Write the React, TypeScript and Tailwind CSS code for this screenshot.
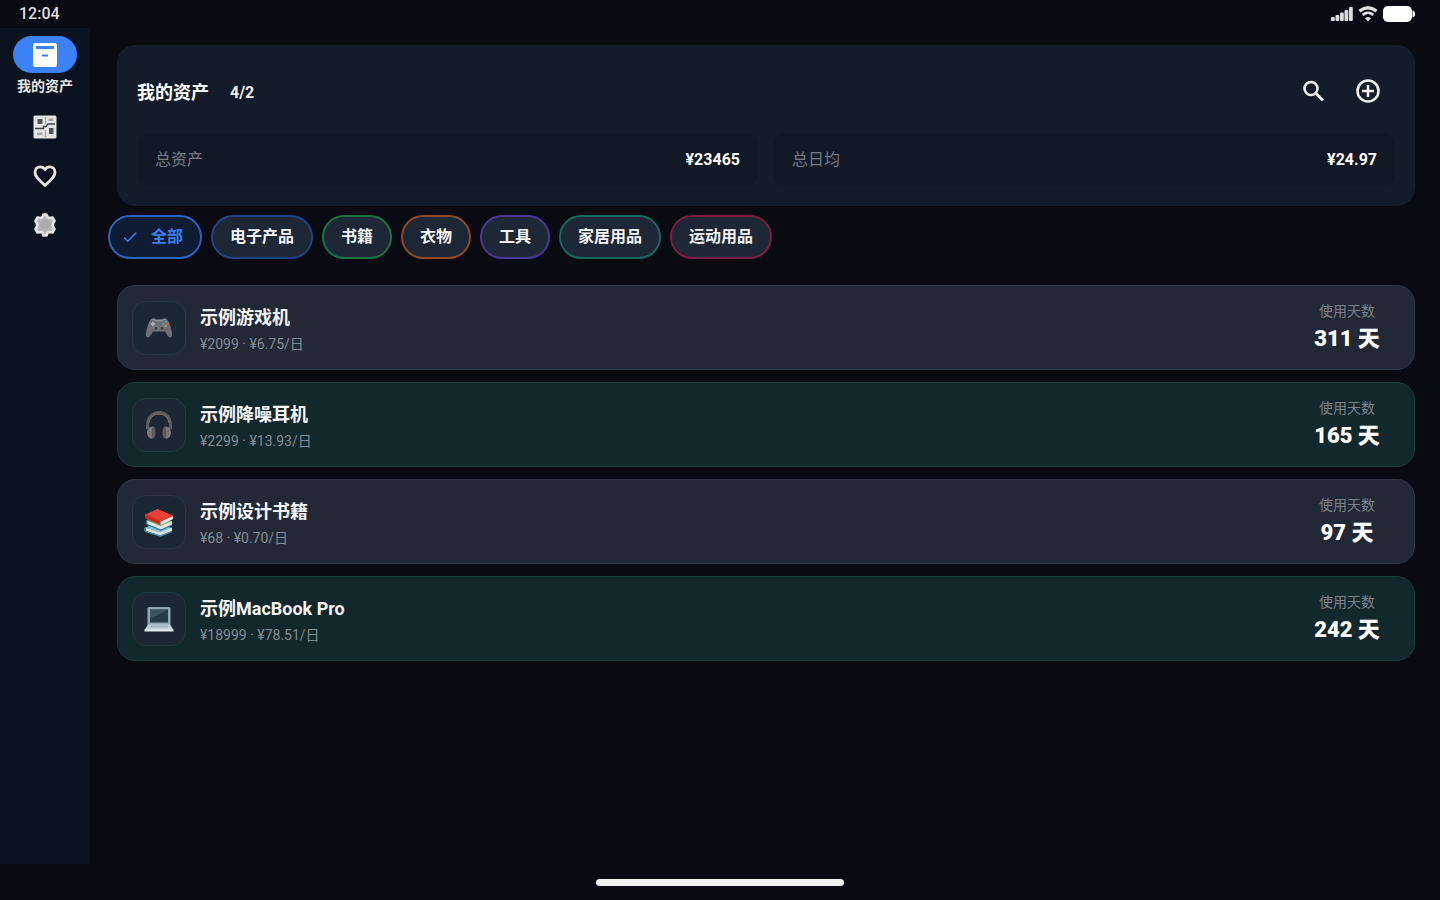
import type { ReactNode } from "react";
import { clsx } from "clsx";
import { MdCheck } from "react-icons/md";

type Asset = {
  name: string;
  detail: string;
  days: number;
  active: boolean;
  icon: ReactNode;
};

const categories = [
  { label: "电子产品", border: "border-[#1f4384]" },
  { label: "书籍", border: "border-[#1b7340]" },
  { label: "衣物", border: "border-[#8f4a26]" },
  { label: "工具", border: "border-[#4c3894]" },
  { label: "家居用品", border: "border-[#17695f]" },
  { label: "运动用品", border: "border-[#7d1c42]" },
];

const assets: Asset[] = [
  { name: "示例游戏机", detail: "¥2099 · ¥6.75/日", days: 311, active: false, icon: <GamepadIcon /> },
  { name: "示例降噪耳机", detail: "¥2299 · ¥13.93/日", days: 165, active: true, icon: <HeadphoneIcon /> },
  { name: "示例设计书籍", detail: "¥68 · ¥0.70/日", days: 97, active: false, icon: <BooksIcon /> },
  { name: "示例MacBook Pro", detail: "¥18999 · ¥78.51/日", days: 242, active: true, icon: <LaptopIcon /> },
];

function GamepadIcon() {
  return (
    <svg viewBox="0 0 30 30" className="h-[30px] w-[30px]" aria-hidden="true">
      <path
        d="M7.500 6c1.500-1 3.500-.8 4.500.3h6c1-1.100 3-1.300 4.500-.3 3.200 2.300 5.200 11 5.700 15.700.2 3-3.200 3.600-4.400 1.300L21 18.500H9L6.200 23c-1.200 2.300-4.600 1.700-4.400-1.300C2.300 17 4.300 8.300 7.500 6z"
        fill="#6b6f74"
      />
      <path d="M7.600 7c1.400-.8 3-.6 4 .6h6.800c1-1.200 2.600-1.400 4-.6" fill="none" stroke="#8d9195" strokeWidth="1.200" />
      <path d="M8.800 8.700v4.600M6.500 11h4.600" stroke="#b2b5b8" strokeWidth="1.500" />
      <circle cx="12" cy="15.300" r="2.100" fill="#3b4046" stroke="#969a9d" strokeWidth=".6" />
      <circle cx="18" cy="15.300" r="2.100" fill="#3b4046" stroke="#969a9d" strokeWidth=".6" />
      <circle cx="21.500" cy="9" r="1.200" fill="#59a48d" />
      <circle cx="23.600" cy="11" r="1.400" fill="#d45a42" />
      <circle cx="19.300" cy="11" r="1.200" fill="#5494ad" />
      <circle cx="21.500" cy="13" r="1.200" fill="#b6a052" />
    </svg>
  );
}

function HeadphoneIcon() {
  return (
    <svg viewBox="0 0 30 30" className="h-[30px] w-[30px]" aria-hidden="true">
      <path d="M3.500 19v-4C3.500 8 8.500 2.500 15 2.500S26.500 8 26.500 15v4" fill="none" stroke="#5c5e60" strokeWidth="3" />
      <path d="M5 13c.5-5 4.500-9 10-9s9.500 4 10 9" fill="none" stroke="#73716f" strokeWidth="1" />
      <path d="M9.500 16.500c-4-.5-6.500 2.500-6.500 6s2.500 6.500 5 6c2.500-.4 1.500-8 1.500-12z" fill="#7c7876" />
      <path d="M20.500 16.500c4-.5 6.500 2.500 6.500 6s-2.500 6.500-5 6c-2.500-.4-1.500-8-1.500-12z" fill="#7c7876" />
      <path d="M9.500 16.500c2.500 1 3 10 0 12-2.500-1-2.500-11 0-12zM20.500 16.500c-2.500 1-3 10 0 12 2.500-1 2.500-11 0-12z" fill="#595a5b" />
    </svg>
  );
}

function BooksIcon() {
  return (
    <svg viewBox="0 0 30 30" className="h-[30px] w-[30px]" aria-hidden="true">
      <path d="M1.500 20.500 12 16.500l16 4.500-11 5.500z" fill="#72bfd2" />
      <path d="m1.500 20.500 14.500 5 12-5v3.500L16.500 28.500 2 24z" fill="#dce3e4" />
      <path d="M1.500 20.500c-1 1-1 3 0 4l15 4.500 11.500-4.500" fill="none" stroke="#4098bd" strokeWidth="1.300" />
      <path d="M3 13.500 14 9l14 5-11 6z" fill="#62a652" />
      <path d="m3 13.500 13.500 5.500L28 14v4L17 23 3.500 17.500z" fill="#e4e7e4" />
      <path d="M3 13.500c-1 1-1 3 0 4L17 23l11-5" fill="none" stroke="#3976a0" strokeWidth="1.300" />
      <path d="M1.500 7.500 13.500 2 29 8.500 17 14z" fill="#ed4035" />
      <path d="m1.500 7.500 15 6.500L29 8.500V12l-12 6L2 11.500z" fill="#f0ebe7" />
      <path d="M1.500 7.500v4l15 6.500v-4z" fill="#c82820" />
      <path d="M1.500 7.500 17 14l12-5.500" fill="none" stroke="#ce3128" strokeWidth="1" />
    </svg>
  );
}

function LaptopIcon() {
  return (
    <svg viewBox="0 0 30 30" className="h-[30px] w-[30px]" aria-hidden="true">
      <rect x="3.500" y="3" width="23" height="19" rx="1.500" fill="#8fa6b3" />
      <rect x="6" y="5.500" width="18" height="13" fill="#263b43" />
      <path d="M6 5.500h18L6 15z" fill="#3d535c" />
      <path d="M4 20.500h22l3.500 5.500H.5z" fill="#c4d3da" />
      <path d="M6 21.500h18l1 2H5z" fill="#9db2bd" />
      <path d="M.5 25.500h29v2H.5z" fill="#e1e8eb" />
    </svg>
  );
}

function StatusBar() {
  return (
    <header className="flex h-7 items-center justify-between pr-6 pl-[19px]">
      <time className="text-base font-medium text-[#dedede]">12:04</time>
      <div className="flex items-center gap-[5px] text-white">
        <svg viewBox="0 0 22 16" className="h-4 w-[22px]" fill="#dcdcdc" aria-hidden="true">
          <rect x="0" y="11" width="3.800" height="4" rx="1" />
          <rect x="4.500" y="9" width="3.800" height="6" rx="1" />
          <rect x="9" y="6.500" width="3.800" height="8.500" rx="1" />
          <rect x="13.500" y="4" width="3.800" height="11" rx="1" />
          <rect x="18" y="1" width="3.800" height="14" rx="1" />
        </svg>
        <svg viewBox="0 0 20 16" className="h-4 w-5" fill="none" stroke="#e2e2e2" aria-hidden="true">
          <path d="M1.500 5.300c5-4.500 12-4.500 17 0" strokeWidth="3.200" />
          <path d="M4.800 8.900c3-2.600 7.400-2.600 10.400 0" strokeWidth="2.800" />
          <path d="M10 15.500 7 12.200c1.700-1.500 4.300-1.500 6 0z" fill="#e2e2e2" stroke="none" />
        </svg>
        <svg viewBox="0 0 33 16" className="h-4 w-[33px]" fill="white" aria-hidden="true">
          <rect x="0" y="0" width="29" height="16" rx="5" />
          <path d="M29.500 4.500c3.500.8 3.500 6.200 0 7z" />
        </svg>
      </div>
    </header>
  );
}

function Sidebar() {
  return (
    <nav className="flex w-[90px] shrink-0 flex-col items-center bg-[#0b1320] pt-2 text-[#e4e4e4]">
      <button type="button" className="mb-1.5 flex flex-col items-center gap-[3px]">
        <span className="flex h-[37px] w-16 items-center justify-center rounded-full bg-[#3b82f6]">
          <svg viewBox="0 0 24 24" className="h-6 w-6" aria-hidden="true">
            <path
              fill="white"
              fillRule="evenodd"
              d="M2.500 0h19A2.500 2.500 0 0 1 24 2.500v19a2.500 2.500 0 0 1-2.500 2.500h-19A2.500 2.500 0 0 1 0 21.500v-19A2.500 2.500 0 0 1 2.500 0zM3 3v3h18V3zm6 8.500v2h6v-2z"
            />
          </svg>
        </span>
        <span className="text-sm leading-5 font-bold">我的资产</span>
      </button>
      <button type="button" aria-label="统计" className="flex h-[49px] items-center">
        <svg viewBox="0 0 24 24" className="h-6 w-6" aria-hidden="true">
          <rect x=".5" y=".5" width="23" height="23" rx="1.500" fill="currentColor" />
          <rect x="4.500" y="4" width="5" height="5" fill="#50555c" />
          <path d="M2 13.500h8.500v-2H13l2-2.500h7" fill="none" stroke="#3c424a" strokeWidth="1.400" />
          <path d="M12.500 2v7M12.500 15v7" stroke="#a7abaf" strokeWidth="1.400" />
          <rect x="15.500" y="3.500" width="5" height="2.500" fill="#a0a4a8" />
          <rect x="16" y="13" width="4.500" height="6" fill="#50555c" />
          <rect x="4" y="17.500" width="5.500" height="2.500" fill="#a0a4a8" />
        </svg>
      </button>
      <button type="button" aria-label="心愿" className="flex h-[49px] items-center">
        <svg viewBox="0 0 24 24" className="h-6 w-6" fill="none" stroke="currentColor" strokeWidth="2.800" strokeLinejoin="round" aria-hidden="true">
          <path d="M12 21.500C6 16 2 12.800 2 8.300 2 5 4.300 2.800 7.300 2.800c2 0 3.700 1 4.700 2.700 1-1.700 2.700-2.700 4.700-2.700C19.700 2.800 22 5 22 8.300c0 4.500-4 7.700-10 13.200z" />
        </svg>
      </button>
      <button type="button" aria-label="设置" className="flex h-[49px] items-center">
        <svg viewBox="0 0 24 24" className="h-6 w-6" aria-hidden="true">
          <path
            d="M10.500 1.500h3l1 2.700 1.500.8 3.500-.5 2 3.500-1.500 2.500v3l1.500 2.500-2 3.500-3.500-.5-1.500.8-1 2.700h-3l-1-2.700L8 19l-3.500.5-2-3.500L4 13.500v-3L2.500 8l2-3.500L8 5l1.500-.8z"
            fill="#b4b7ba"
            stroke="currentColor"
            strokeWidth="2.600"
            strokeLinejoin="round"
          />
          <circle cx="12" cy="12" r="5" fill="#a9acaf" />
        </svg>
      </button>
    </nav>
  );
}

function Stat({ label, value }: { label: string; value: string }) {
  return (
    <div className="flex h-[53px] items-center justify-between rounded-xl bg-[#111826] px-[18px]">
      <dt className="text-base text-[#777c87]">{label}</dt>
      <dd className="text-base font-bold text-white">{value}</dd>
    </div>
  );
}

function Summary() {
  return (
    <section className="mx-[9px] rounded-[18px] bg-[#141b2a] p-5">
      <div className="mb-4 flex h-[52px] items-center">
        <h1 className="pt-1 text-lg font-bold text-white">我的资产</h1>
        <span className="ml-[21px] pt-1 text-base font-bold text-[#f0f0f0]">4/2</span>
        <div className="ml-auto flex text-[#ededed]">
          <button type="button" aria-label="搜索" className="flex w-[54px] justify-center">
            <svg viewBox="0 0 24 24" className="h-6 w-6" fill="none" stroke="currentColor" strokeWidth="2.600" aria-hidden="true">
              <circle cx="9" cy="9.500" r="6.500" />
              <path d="m13.500 14 7.500 7.500" strokeWidth="3" />
            </svg>
          </button>
          <button type="button" aria-label="添加" className="flex w-[54px] justify-center">
            <svg viewBox="0 0 24 24" className="h-6 w-6" fill="none" stroke="currentColor" strokeWidth="2.600" aria-hidden="true">
              <circle cx="12" cy="12" r="10.500" />
              <path d="M12 6v12M6 12h12" />
            </svg>
          </button>
        </div>
      </div>
      <dl className="grid grid-cols-2 gap-4">
        <Stat label="总资产" value="¥23465" />
        <Stat label="总日均" value="¥24.97" />
      </dl>
    </section>
  );
}

function CategoryFilter() {
  return (
    <div className="mt-[9px] flex flex-wrap gap-[9px]">
      <button
        type="button"
        aria-pressed="true"
        className="flex h-11 items-center gap-3 rounded-full border-2 border-[#2b63bd] bg-[#101c34] pr-[17px] pl-[11px] text-base font-bold text-[#3b7ff0]"
      >
        <MdCheck className="h-[18px] w-[18px]" />
        全部
      </button>
      {categories.map((category) => (
        <button
          key={category.label}
          type="button"
          className={clsx(
            "h-11 rounded-full border-2 bg-[#1d2735] px-[17px] text-base font-bold text-[#f3f3f3]",
            category.border,
          )}
        >
          {category.label}
        </button>
      ))}
    </div>
  );
}

function AssetCard({ asset }: { asset: Asset }) {
  return (
    <li
      className={clsx(
        "flex h-[85px] items-center rounded-[18px] border pr-8 pl-[14px]",
        asset.active ? "border-[#164038] bg-[#13282c]" : "border-[#303643] bg-[#222836]",
      )}
    >
      <div
        className={clsx(
          "flex h-[54px] w-[54px] items-center justify-center rounded-[14px] border bg-[#1b2733]",
          asset.active ? "border-[#1b3b3b]" : "border-[#2b3541]",
        )}
      >
        {asset.icon}
      </div>
      <div className="ml-[14px] flex flex-1 flex-col pt-1.5">
        <h2 className="text-lg leading-[26px] font-bold text-[#f5f5f5]">{asset.name}</h2>
        <p className="text-sm leading-[26px] text-[#858b94]">{asset.detail}</p>
      </div>
      <div className="flex w-[70px] flex-col items-center pb-1.5">
        <span className="text-sm leading-7 text-[#7c828c]">使用天数</span>
        <strong className="text-[22px] leading-7 font-black whitespace-nowrap text-white">{asset.days} 天</strong>
      </div>
    </li>
  );
}

export default function App() {
  return (
    <div className="flex min-h-screen flex-col bg-[#090a12] font-[Roboto,'Noto_Sans_CJK_SC',sans-serif]">
      <StatusBar />
      <div className="flex flex-1">
        <Sidebar />
        <main className="flex-1 pt-[17px] pr-4 pl-[18px]">
          <Summary />
          <CategoryFilter />
          <ul className="mx-[9px] mt-[26px] flex flex-col gap-3">
            {assets.map((asset) => (
              <AssetCard key={asset.name} asset={asset} />
            ))}
          </ul>
        </main>
      </div>
      <footer className="flex h-9 items-center justify-center">
        <div className="h-[7px] w-[248px] rounded-full bg-[#f2f2f2]" />
      </footer>
    </div>
  );
}
